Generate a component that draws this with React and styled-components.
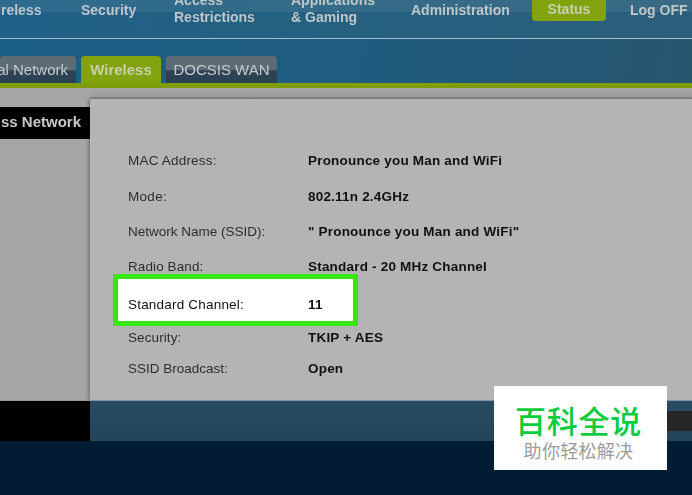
import React from "react";
import styled, { createGlobalStyle } from "styled-components";

const Global = createGlobalStyle`
  html, body { margin: 0; padding: 0; background: #021c33; }
  #root { width: 692px; height: 495px; overflow: hidden; }
`;
const Page = styled.div`
  position: relative; width: 692px; height: 495px; overflow: hidden;
  display: flex; flex-direction: column;
  font-family: "Liberation Sans", Arial, sans-serif;
`;
const TopNav = styled.nav`
  height: 38px; flex: none; display: flex; align-items: flex-start;
  background: linear-gradient(100deg, #1f6087 0, #25607f 50%, #2a5f7c 100%);
  border-bottom: 1px solid #a5bdca; box-sizing: content-box;
  position: relative;
`;
const TopSheen = styled.div`
  position: absolute; left: 0; right: 0; top: 0; height: 12px;
  background: rgba(255, 255, 255, 0.07);
`;
const NavItem = styled.div`
  position: relative;
  width: ${p => p.$w}px; flex: none; box-sizing: border-box;
  font-size: 14px; line-height: 17px; font-weight: 700; color: #bfc6ca;
  filter: blur(0.6px); white-space: nowrap;
  margin-top: ${p => p.$top}px;
  text-indent: ${p => p.$indent || 0}px;
`;
const StatusPill = styled.div`
  position: relative;
  width: 74px; height: 21px; margin-right: 24px; flex: none;
  background: #82a30d; border-radius: 0 0 4px 4px;
  display: flex; align-items: center; justify-content: center;
  font-size: 14px; font-weight: 700; color: #c8cfae;
`;
const PillText = styled.span` filter: blur(0.7px); margin-top: -3px; `;
const SubBar = styled.div`
  height: 44px; flex: none; display: flex; align-items: flex-end; gap: 5px;
  background: linear-gradient(100deg, #1c5f86 0, #1f5c80 50%, #27566f 100%);
`;
const Tab = styled.div`
  width: ${p => p.$w}px; height: 27px; flex: none; box-sizing: border-box;
  border-radius: 4px 4px 0 0; display: flex; align-items: center;
  justify-content: ${p => p.$end ? "flex-end" : "center"};
  padding-right: ${p => p.$end ? 8 : 0}px;
  background: ${p => p.$active ? "#82a30d" : "linear-gradient(180deg, #5d6b75 0, #5d6b75 50%, #2e4455 55%, #2b4152 100%)"};
  color: ${p => p.$active ? "#c8cfae" : "#c5cacd"};
  font-size: 15px; font-weight: ${p => p.$active ? 700 : 400};
  white-space: nowrap; overflow: hidden;
`;
const TabText = styled.span` filter: blur(0.5px); `;
const GreenRule = styled.div` height: 5px; flex: none; background: #7f9c0c; `;
const Content = styled.div`
  height: 312px; flex: none; display: flex;
  background: #a6a6a6;
`;
const Side = styled.aside`
  width: 90px; flex: none; padding-top: 19px; box-sizing: border-box;
  position: relative; z-index: 1;
`;
const SideTab = styled.div`
  height: 32px; background: #000; color: #c8c8c8;
  font-size: 15px; font-weight: 700; line-height: 29px;
  display: flex; justify-content: flex-end; padding-right: 9px; white-space: nowrap;
`;
const SideText = styled.span` filter: blur(0.5px); `;
const PanelColumn = styled.div`
  flex: 1; display: flex; flex-direction: column;
`;
const Strip = styled.div`
  height: 11px; flex: none;
  background: linear-gradient(180deg, #a8a8a8 0, #9c9c9c 75%, #6f6f6f 100%);
`;
const Panel = styled.main`
  flex: 1; background: #b4b4b4; padding: 43px 0 0 38px;
  box-shadow: -2px 0 3px #7a7a7a;
`;
const Row = styled.div`
  display: flex; align-items: center; height: ${p => p.$h}px;
  box-sizing: border-box; padding-top: ${p => p.$pad || 0}px;
  font-size: 13.5px; color: #1c1c1c; white-space: nowrap;
`;
const HighlightRow = styled(Row)`
  width: 245px; height: 52px; margin-left: -15px;
  padding: 8px 0 0 10px; border: 5px solid #37e60c; background: #fff; color: #111;
`;
const Label = styled.div`
  width: 180px; flex: none; letter-spacing: ${p => p.$sp || 0}px; opacity: 0.9;
  filter: blur(0.25px);
`;
const HighlightLabel = styled(Label)` opacity: 1; `;
const Value = styled.div` font-weight: 700; letter-spacing: 0.2px; color: #111; filter: blur(0.25px); `;
const BottomBand = styled.div`
  height: 41px; flex: none; display: flex;
`;
const BlackFoot = styled.div` width: 90px; flex: none; background: #000; border-top: 1px solid #9a9a9a; box-sizing: border-box; `;
const BlueFoot = styled.div`
  flex: 1; background: linear-gradient(180deg, #294c64 0, #234459 100%);
  border-top: 1px solid #7f93a0; box-sizing: border-box;
  display: flex; justify-content: flex-end; padding-top: 10px;
`;
const FootButton = styled.div` width: 40px; height: 20px; background: #262626; `;
const Floor = styled.div` flex: 1; background: #021c33; `;
const Badge = styled.div`
  position: absolute; left: 494px; top: 386px; width: 173px; height: 84px;
  background: #fff; display: flex; flex-direction: column; align-items: center;
  font-family: "Noto Sans CJK SC", sans-serif;
`;
const BadgeTitle = styled.div`
  font-size: 31px; line-height: 34px; font-weight: 500; color: #0ecb3f; margin: 17px 4px 0 0; letter-spacing: 0.7px;
`;
const BadgeSub = styled.div`
  font-size: 18px; line-height: 22px; color: #9b9b9b; margin: 2px 4px 0 0; letter-spacing: 0.3px;
`;

const rows1 = [
  ["MAC Address:", "Pronounce you Man and WiFi", 36, 0, 0.2],
  ["Mode:", "802.11n 2.4GHz", 36, 0, 0.3],
  ["Network Name (SSID):", "\" Pronounce you Man and WiFi\"", 35, 0, 0],
  ["Radio Band:", "Standard - 20 MHz Channel", 25, 10, 0.1],
];
const rows2 = [
  ["Security:", "TKIP + AES", 22, 0, 0.1],
  ["SSID Broadcast:", "Open", 40, 0, 0],
];

export default function App() {
  return (
    <Page>
      <Global />
      <TopNav>
        <TopSheen />
        <NavItem $w={81} $top={2} $indent={-16}>Wireless</NavItem>
        <NavItem $w={93} $top={2}>Security</NavItem>
        <NavItem $w={117} $top={-8}>Access<br />Restrictions</NavItem>
        <NavItem $w={120} $top={-8}>Applications<br />&amp; Gaming</NavItem>
        <NavItem $w={121} $top={2}>Administration</NavItem>
        <StatusPill><PillText>Status</PillText></StatusPill>
        <NavItem $w={62} $top={2}>Log OFF</NavItem>
      </TopNav>
      <SubBar>
        <Tab $w={76} $end><TabText>al Network</TabText></Tab>
        <Tab $w={80} $active><TabText>Wireless</TabText></Tab>
        <Tab $w={111}><TabText>DOCSIS WAN</TabText></Tab>
      </SubBar>
      <GreenRule />
      <Content>
        <Side>
          <SideTab><SideText>ss Network</SideText></SideTab>
        </Side>
        <PanelColumn>
          <Strip />
          <Panel>
            {rows1.map(([l, v, h, pad, sp]) => (
              <Row key={l} $h={h} $pad={pad}><Label $sp={sp}>{l}</Label><Value>{v}</Value></Row>
            ))}
            <HighlightRow><HighlightLabel $sp={0.2}>Standard Channel:</HighlightLabel><Value>11</Value></HighlightRow>
            {rows2.map(([l, v, h, pad, sp]) => (
              <Row key={l} $h={h} $pad={pad}><Label $sp={sp}>{l}</Label><Value>{v}</Value></Row>
            ))}
          </Panel>
        </PanelColumn>
      </Content>
      <BottomBand>
        <BlackFoot />
        <BlueFoot><FootButton /></BlueFoot>
      </BottomBand>
      <Floor />
      <Badge>
        <BadgeTitle>百科全说</BadgeTitle>
        <BadgeSub>助你轻松解决</BadgeSub>
      </Badge>
    </Page>
  );
}
